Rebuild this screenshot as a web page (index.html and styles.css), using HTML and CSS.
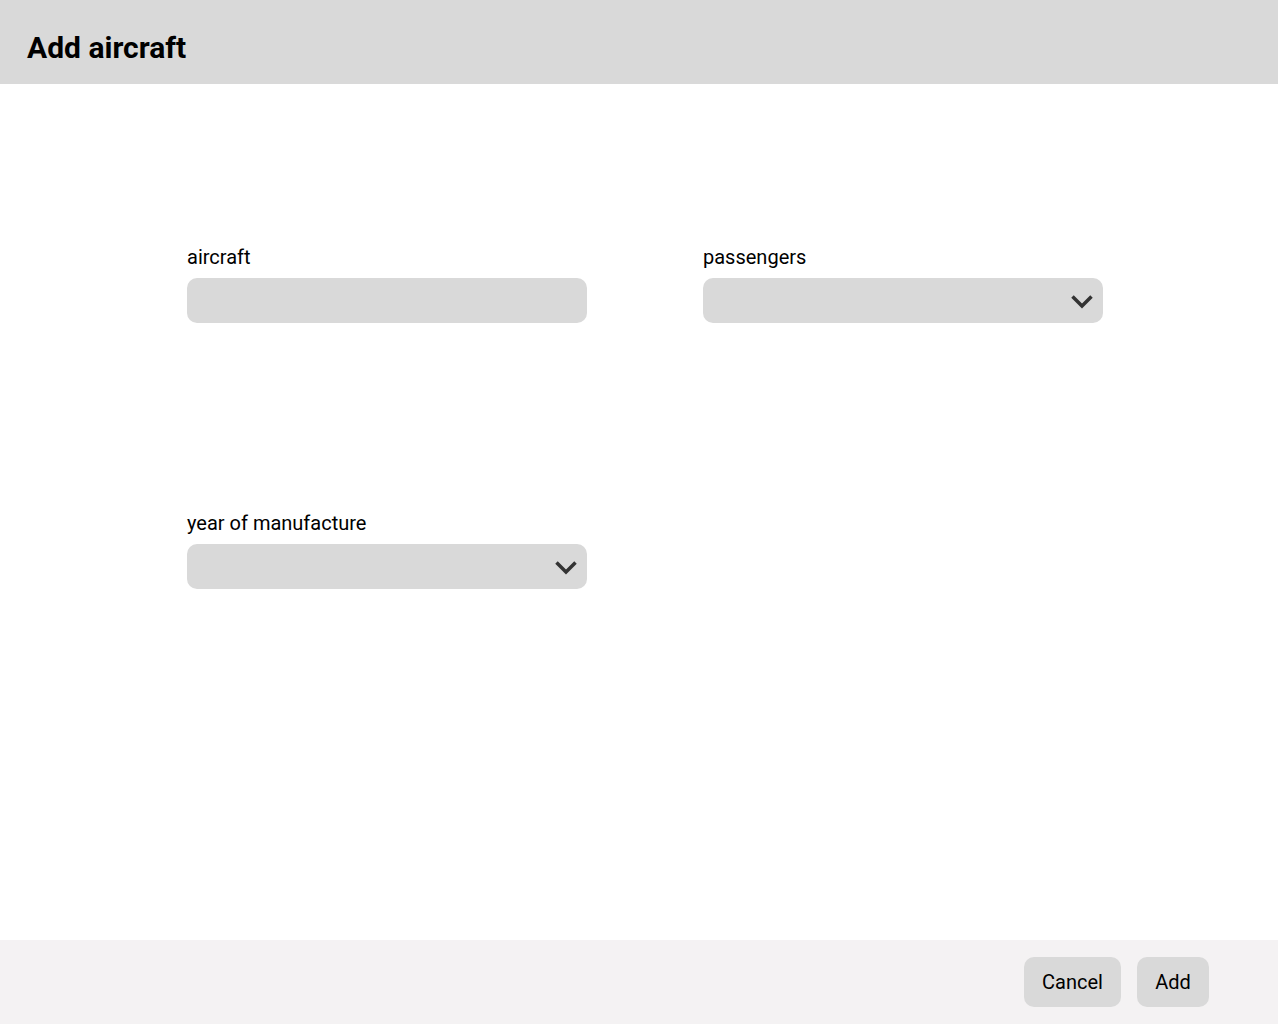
FILE: index.html
```html
<!DOCTYPE html>
<html lang="en">
<head>
<meta charset="utf-8">
<title>Add aircraft</title>
<link rel="stylesheet" href="styles.css">
</head>
<body>
<div class="page">
  <header class="header">
    <h1 class="title">Add aircraft</h1>
  </header>
  <main class="content">
    <div class="form-grid">
      <div class="field">
        <label class="label">aircraft</label>
        <div class="input"></div>
      </div>
      <div class="field">
        <label class="label">passengers</label>
        <div class="input select">
          <svg class="chevron" width="22" height="14" viewBox="0 0 22 14"><path d="M1.5 1.5 L11 11 L20.5 1.5" fill="none" stroke="#333" stroke-width="3.5" stroke-linejoin="miter"/></svg>
        </div>
      </div>
      <div class="field">
        <label class="label">year of manufacture</label>
        <div class="input select">
          <svg class="chevron" width="22" height="14" viewBox="0 0 22 14"><path d="M1.5 1.5 L11 11 L20.5 1.5" fill="none" stroke="#333" stroke-width="3.5" stroke-linejoin="miter"/></svg>
        </div>
      </div>
    </div>
  </main>
  <footer class="footer">
    <button class="btn btn-cancel">Cancel</button>
    <button class="btn btn-add">Add</button>
  </footer>
</div>
</body>
</html>
```

FILE: styles.css
```css
html, body {
  margin: 0;
  padding: 0;
  background: #ffffff;
  font-family: Roboto, "Liberation Sans", sans-serif;
  color: #000;
}
.page {
  display: flex;
  flex-direction: column;
  height: 1024px;
}
.header {
  height: 84px;
  background: #d9d9d9;
  display: flex;
  align-items: center;
  padding-left: 27px;
  box-sizing: border-box;
}
.title {
  margin: 0;
  padding-top: 11px;
  font-size: 30px;
  font-weight: 700;
}
.content {
  flex: 1;
  padding: 161px 0 0 187px;
  box-sizing: border-box;
}
.form-grid {
  display: grid;
  grid-template-columns: 400px 400px;
  column-gap: 116px;
  row-gap: 188px;
}
.field {
  display: flex;
  flex-direction: column;
  gap: 9px;
}
.label {
  font-size: 20px;
  line-height: 24px;
}
.input {
  height: 45px;
  background: #d9d9d9;
  border-radius: 10px;
  display: flex;
  align-items: center;
  justify-content: flex-end;
  padding-right: 10px;
}
.chevron {
  display: block;
  margin-top: 2px;
}
.footer {
  height: 84px;
  background: #f4f2f3;
  display: flex;
  align-items: center;
  justify-content: flex-end;
  gap: 16px;
  padding-right: 69px;
}
.btn {
  height: 50px;
  padding: 0;
  border: none;
  border-radius: 10px;
  background: #d9d9d9;
  font-family: Roboto, "Liberation Sans", sans-serif;
  font-size: 20px;
  color: #000;
}
.btn-cancel {
  width: 97px;
}
.btn-add {
  width: 72px;
}
```
